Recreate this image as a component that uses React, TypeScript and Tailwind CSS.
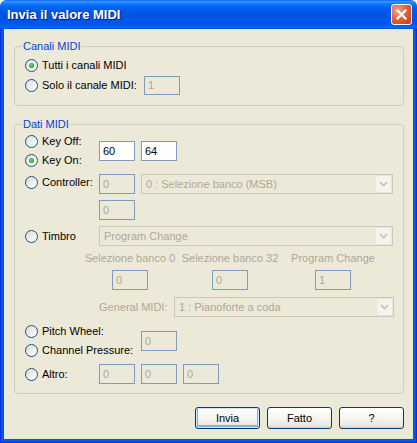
import React from "react";

// Windows XP style "Invia il valore MIDI" dialog

const Radio = ({ label, checked }: { label: string; checked?: boolean }) => (
  <label className="flex items-center gap-[4px] whitespace-nowrap">
    <span className="flex h-[13px] w-[13px] shrink-0 items-center justify-center rounded-full border border-[#1C5180] bg-[linear-gradient(135deg,#DCDCD7,#FFFFFF)]">
      {checked && (
        <span className="h-[5px] w-[5px] rounded-full bg-[radial-gradient(circle_at_40%_40%,#6EDB6A,#21A121_75%)]" />
      )}
    </span>
    <span>{label}</span>
  </label>
);

const Box = ({
  value,
  disabled,
  tall = true,
}: {
  value: string;
  disabled?: boolean;
  tall?: boolean;
}) => (
  <div
    className={`flex w-[36px] shrink-0 items-center border border-[#7F9DB9] pl-[3px] ${
      tall ? "h-[20px]" : "h-[19px]"
    } ${disabled ? "text-[#ACA899]" : "bg-white text-black"}`}
  >
    {value}
  </div>
);

const Combo = ({ value, width }: { value: string; width: string }) => (
  <div
    className={`flex h-[20px] shrink-0 items-center border border-[#C9C7BA] ${width}`}
  >
    <span className="min-w-0 flex-1 truncate pl-[4px] text-[#ACA899]">
      {value}
    </span>
    <span className="flex h-[18px] w-[17px] items-center justify-center rounded-[2px] border border-[#E8E6DC] bg-[#F4F3EC]">
      <svg width="9" height="6" viewBox="0 0 9 6">
        <path
          d="M1 1l3.5 3.5L8 1"
          fill="none"
          stroke="#C4C1B3"
          strokeWidth="1.6"
        />
      </svg>
    </span>
  </div>
);

const Btn = ({ label, primary }: { label: string; primary?: boolean }) => (
  <button
    className={`flex h-[22px] w-[65px] items-center justify-center rounded-[3px] border border-[#003C74] bg-[linear-gradient(180deg,#FFFFFF_0%,#F5F4EF_55%,#E9E6DA_88%,#D6D0C5_100%)] text-black ${
      primary
        ? "shadow-[inset_0_0_0_1px_#CEE7FF,inset_0_-1px_0_2px_#89ADE4]"
        : ""
    }`}
  >
    {label}
  </button>
);

const App = () => {
  return (
    <div className="flex h-[443px] w-[417px] flex-col font-['Liberation_Sans',Arial,sans-serif] text-[11px] leading-[13px] text-black">
      {/* title bar */}
      <div className="flex h-[29px] shrink-0 items-center justify-between rounded-t-[6px] bg-[linear-gradient(180deg,#0058EE_0%,#3A93FF_4%,#288EFF_8%,#127DFF_12%,#036FFC_18%,#0262EE_26%,#0057E5_42%,#0054E3_60%,#0055EB_78%,#005BF5_88%,#026AFE_94%,#0049D0_100%)] pl-[7px] pr-[5px]">
        <span className="text-[13px] leading-[15px] font-bold text-white [text-shadow:1px_1px_0_#0A1883]">
          Invia il valore MIDI
        </span>
        <div className="flex h-[21px] w-[21px] items-center justify-center rounded-[3px] border border-white bg-[radial-gradient(circle_at_30%_30%,#F2A78C,#E2643F_45%,#C13A18)]">
          <svg width="11" height="11" viewBox="0 0 11 11">
            <path
              d="M1.5 1.5l8 8M9.5 1.5l-8 8"
              stroke="white"
              strokeWidth="2.2"
              strokeLinecap="square"
            />
          </svg>
        </div>
      </div>

      {/* frame + client */}
      <div className="flex flex-1 flex-col border-x border-b border-[#0831D9] bg-[#0058E6] px-[3px] pb-[3px]">
        <div className="flex flex-1 flex-col bg-[#ECE9D8] pt-[11px]">
          {/* Canali MIDI */}
          <fieldset className="mr-[9px] ml-[10px] rounded-[3px] border border-[#D0D0BF] pb-[10px]">
            <legend className="ml-[7px] px-[1px] text-[#0046D5]">
              Canali MIDI
            </legend>
            <div className="flex flex-col pt-[2px] pl-[10px]">
              <div className="flex h-[20px] items-center">
                <Radio checked label="Tutti i canali MIDI" />
              </div>
              <div className="mt-[1px] flex h-[19px] items-center">
                <div className="w-[119px]">
                  <Radio label="Solo il canale MIDI:" />
                </div>
                <Box value="1" disabled tall={false} />
              </div>
            </div>
          </fieldset>

          {/* Dati MIDI */}
          <fieldset className="mt-[12px] mr-[9px] ml-[10px] rounded-[3px] border border-[#D0D0BF] pb-[9px]">
            <legend className="ml-[7px] px-[1px] text-[#0046D5]">
              Dati MIDI
            </legend>
            <div className="flex flex-col pl-[10px]">
              <div className="mt-[1px] flex items-center">
                <div className="flex w-[74px] flex-col">
                  <div className="flex h-[19px] items-center">
                    <Radio label="Key Off:" />
                  </div>
                  <div className="flex h-[19px] items-center">
                    <Radio checked label="Key On:" />
                  </div>
                </div>
                <div className="flex gap-[6px]">
                  <Box value="60" />
                  <Box value="64" />
                </div>
              </div>

              <div className="mt-[4px] flex items-start">
                <div className="flex h-[17px] w-[74px] items-center">
                  <Radio label="Controller:" />
                </div>
                <div className="flex flex-col gap-[6px]">
                  <div className="flex gap-[6px]">
                    <Box value="0" disabled />
                    <Combo value="0 : Selezione banco (MSB)" width="w-[252px]" />
                  </div>
                  <Box value="0" disabled />
                </div>
              </div>

              <div className="mt-[6px] flex items-center">
                <div className="w-[74px]">
                  <Radio label="Timbro" />
                </div>
                <Combo value="Program Change" width="w-[294px]" />
              </div>

              <div className="mt-[6px] ml-[55px] flex text-[#ACA899]">
                {[
                  ["Selezione banco 0", "w-[100px]"],
                  ["Selezione banco 32", "w-[100px]"],
                  ["Program Change", "w-[106px]"],
                ].map(([label, w], i) => (
                  <div
                    key={label}
                    className={`flex flex-col items-center gap-[5px] ${w}`}
                  >
                    <span className="whitespace-nowrap">{label}</span>
                    <Box value={i === 2 ? "1" : "0"} disabled />
                  </div>
                ))}
              </div>

              <div className="mt-[7px] ml-[74px] flex items-center gap-[9px]">
                <span className="w-[66px] text-right whitespace-nowrap text-[#ACA899]">
                  General MIDI:
                </span>
                <Combo value="1 : Pianoforte a coda" width="w-[220px]" />
              </div>

              <div className="mt-[5px] flex items-center">
                <div className="flex w-[116px] flex-col">
                  <div className="flex h-[19px] items-center">
                    <Radio label="Pitch Wheel:" />
                  </div>
                  <div className="flex h-[19px] items-center">
                    <Radio label="Channel Pressure:" />
                  </div>
                </div>
                <Box value="0" disabled />
              </div>

              <div className="mt-[4px] flex items-center">
                <div className="w-[74px]">
                  <Radio label="Altro:" />
                </div>
                <div className="flex gap-[6px]">
                  <Box value="0" disabled />
                  <Box value="0" disabled />
                  <Box value="0" disabled />
                </div>
              </div>
            </div>
          </fieldset>

          <div className="mt-[13px] flex justify-end gap-[7px] pr-[9px]">
            <Btn label="Invia" primary />
            <Btn label="Fatto" />
            <Btn label="?" />
          </div>
        </div>
      </div>
    </div>
  );
};

export default App;
